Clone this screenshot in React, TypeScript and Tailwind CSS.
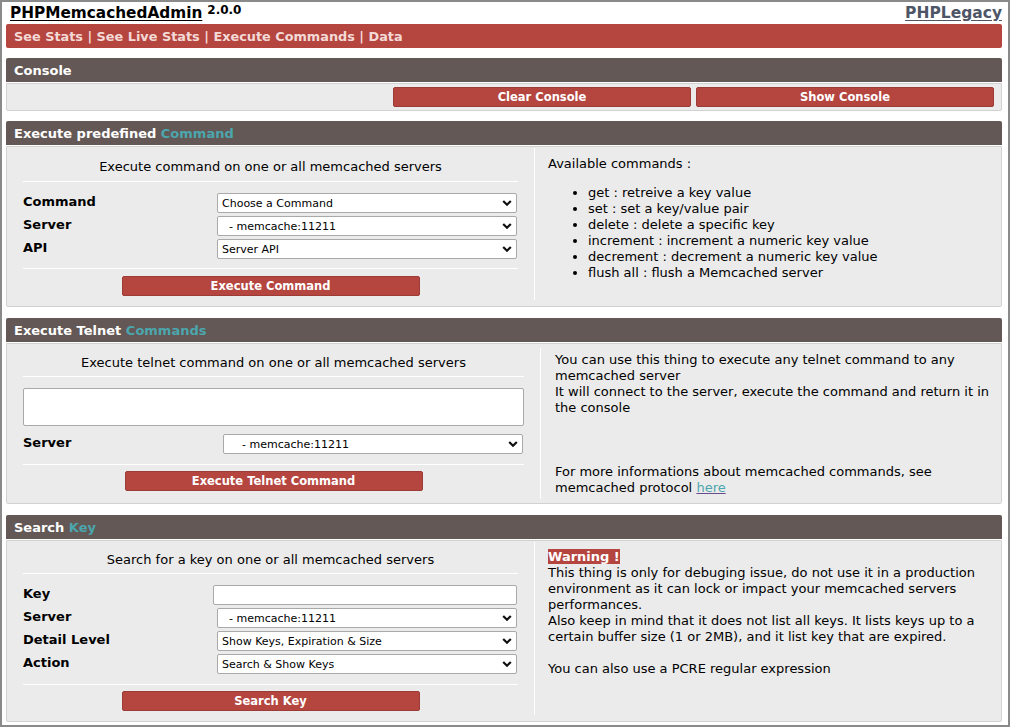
import React from "react";

const sans = "font-['DejaVu_Sans',sans-serif]";

function Chevron() {
  return (
    <svg
      width="10"
      height="7"
      viewBox="0 0 10 7"
      className="absolute right-[4px] top-1/2 -translate-y-1/2"
    >
      <path d="M1.2 1.5 L5 5.3 L8.8 1.5" fill="none" stroke="#111" strokeWidth="2.2" />
    </svg>
  );
}

function Select({ value }: { value: string }) {
  return (
    <div
      className={`relative mr-[1px] h-[20px] w-[300px] rounded-[2px] border border-[#a9a9a9] bg-white pl-[4px] ${sans} text-[11px] leading-[19px] text-black whitespace-pre`}
    >
      {value}
      <Chevron />
    </div>
  );
}

function Button({ label }: { label: string }) {
  return (
    <div
      className={`h-[20px] w-[298px] rounded-[2px] border border-[#9d3b36] bg-[#b5453f] text-center ${sans} text-[11.5px] font-bold leading-[18px] text-white`}
    >
      {label}
    </div>
  );
}

function Header({ title, accent }: { title: string; accent?: string }) {
  return (
    <div
      className={`h-[24px] rounded-t-[2px] bg-[#635855] pl-[8px] ${sans} text-[13px] font-bold leading-[25px] text-white`}
    >
      {title} {accent && <span className="text-[#4ba6ad]">{accent}</span>}
    </div>
  );
}

function Row({ label, children }: { label: string; children: React.ReactNode }) {
  return (
    <div className="flex items-start justify-between">
      <span className={`pt-[1px] ${sans} text-[13px] font-bold leading-[16px] text-black`}>{label}</span>
      {children}
    </div>
  );
}

function Subtitle({ text }: { text: string }) {
  return <div className="pt-[1px] text-center text-[13px] leading-[16px]">{text}</div>;
}

const commands = [
  "get : retreive a key value",
  "set : set a key/value pair",
  "delete : delete a specific key",
  "increment : increment a numeric key value",
  "decrement : decrement a numeric key value",
  "flush all : flush a Memcached server",
];

export default function App() {
  return (
    <div className={`h-[727px] w-[1010px] overflow-hidden border-2 border-[#8a8a8a] bg-white pl-[4px] pr-[6px] ${sans} text-black`}>
      {/* Top */}
      <div className="flex h-[22px] items-start justify-between">
        <div className="flex items-start pl-[4px] pt-[2px]">
          <span className="text-[15.3px] font-bold leading-[18px] underline underline-offset-2">PHPMemcachedAdmin</span>
          <span className="ml-[5px] -mt-[1px] text-[12px] font-bold leading-[14px]">2.0.0</span>
        </div>
        <span className="pt-[2px] text-[15.5px] font-bold leading-[18px] text-[#4d5566] underline underline-offset-2">
          PHPLegacy
        </span>
      </div>

      {/* Menu */}
      <div className="h-[24px] rounded-[2px] bg-[#b5453f] pl-[8px] text-[12.85px] font-bold leading-[25px] text-[#f3dad6]">
        See Stats | See Live Stats | Execute Commands | Data
      </div>

      {/* Console */}
      <div className="mt-[10px]">
        <Header title="Console" />
        <div className="mt-[1px] flex justify-end gap-[5px] rounded-b-[2px] border border-[#d2d2d2] bg-[#ebebeb] px-[7px] py-[3px]">
          <Button label="Clear Console" />
          <Button label="Show Console" />
        </div>
      </div>

      {/* Execute predefined Command */}
      <div className="mt-[10px]">
        <Header title="Execute predefined" accent="Command" />
        <div className="mt-[1px] flex rounded-b-[2px] border border-[#d2d2d2] bg-[#ebebeb]">
          <div className="w-[527px] px-[16px] pt-[11px] pb-[10px]">
            <Subtitle text="Execute command on one or all memcached servers" />
            <div className="mt-[6px] h-px bg-white" />
            <div className="mt-[11px] flex flex-col gap-[3px]">
              <Row label="Command"><Select value="Choose a Command" /></Row>
              <Row label="Server"><Select value={"\u00a0\u00a0- memcache:11211"} /></Row>
              <Row label="API"><Select value="Server API" /></Row>
            </div>
            <div className="mt-[9px] h-px bg-white" />
            <div className="mt-[7px] flex justify-center">
              <Button label="Execute Command" />
            </div>
          </div>
          <div className="mt-[1px] mb-[6px] flex-1 border-l border-white pl-[13px] pt-[8px] text-[13px] leading-[16px]">
            <div>Available commands :</div>
            <ul className="mt-[13px] list-disc pl-[40px]">
              {commands.map((c) => (
                <li key={c}>{c}</li>
              ))}
            </ul>
          </div>
        </div>
      </div>

      {/* Execute Telnet Commands */}
      <div className="mt-[11px]">
        <Header title="Execute Telnet" accent="Commands" />
        <div className="mt-[1px] flex rounded-b-[2px] border border-[#d2d2d2] bg-[#ebebeb]">
          <div className="w-[533px] px-[16px] pt-[10px] pb-[12px]">
            <Subtitle text="Execute telnet command on one or all memcached servers" />
            <div className="mt-[5px] h-px bg-white" />
            <div className="mt-[11px] h-[38px] rounded-[2px] border border-[#a9a9a9] bg-white" />
            <div className="mt-[8px]">
              <Row label="Server"><Select value={"\u00a0\u00a0\u00a0\u00a0- memcache:11211"} /></Row>
            </div>
            <div className="mt-[10px] h-px bg-white" />
            <div className="mt-[6px] flex justify-center">
              <Button label="Execute Telnet Command" />
            </div>
          </div>
          <div className="my-[4px] flex-1 border-l border-white pl-[14px] pt-[4px] text-[13px] leading-[16px] whitespace-nowrap">
            <div>You can use this thing to execute any telnet command to any</div>
            <div>memcached server</div>
            <div>It will connect to the server, execute the command and return it in</div>
            <div>the console</div>
            <div className="mt-[48px]">For more informations about memcached commands, see</div>
            <div>
              memcached protocol{" "}
              <span className="text-[#4ba6ad] underline decoration-[#6a4a8c]">here</span>
            </div>
          </div>
        </div>
      </div>

      {/* Search Key */}
      <div className="mt-[11px]">
        <Header title="Search" accent="Key" />
        <div className="mt-[1px] flex rounded-b-[2px] border border-[#d2d2d2] bg-[#ebebeb]">
          <div className="w-[527px] px-[16px] pt-[10px] pb-[10px]">
            <Subtitle text="Search for a key on one or all memcached servers" />
            <div className="mt-[5px] h-px bg-white" />
            <div className="mt-[11px] flex flex-col gap-[3px]">
              <Row label="Key">
                <div className="mr-[1px] h-[20px] w-[304px] rounded-[2px] border border-[#a9a9a9] bg-white" />
              </Row>
              <Row label="Server"><Select value={"\u00a0\u00a0- memcache:11211"} /></Row>
              <Row label="Detail Level"><Select value="Show Keys, Expiration & Size" /></Row>
              <Row label="Action"><Select value="Search & Show Keys" /></Row>
            </div>
            <div className="mt-[10px] h-px bg-white" />
            <div className="mt-[6px] flex justify-center">
              <Button label="Search Key" />
            </div>
          </div>
          <div className="mt-[1px] mb-[6px] flex-1 border-l border-white pl-[13px] pt-[7px] text-[13px] leading-[16px] whitespace-nowrap">
            <div>
              <span className="bg-[#b5453f] font-bold text-white">Warning !</span>
            </div>
            <div>This thing is only for debuging issue, do not use it in a production</div>
            <div>environment as it can lock or impact your memcached servers</div>
            <div>performances.</div>
            <div>Also keep in mind that it does not list all keys. It lists keys up to a</div>
            <div>certain buffer size (1 or 2MB), and it list key that are expired.</div>
            <div className="mt-[16px]">You can also use a PCRE regular expression</div>
          </div>
        </div>
      </div>
    </div>
  );
}
